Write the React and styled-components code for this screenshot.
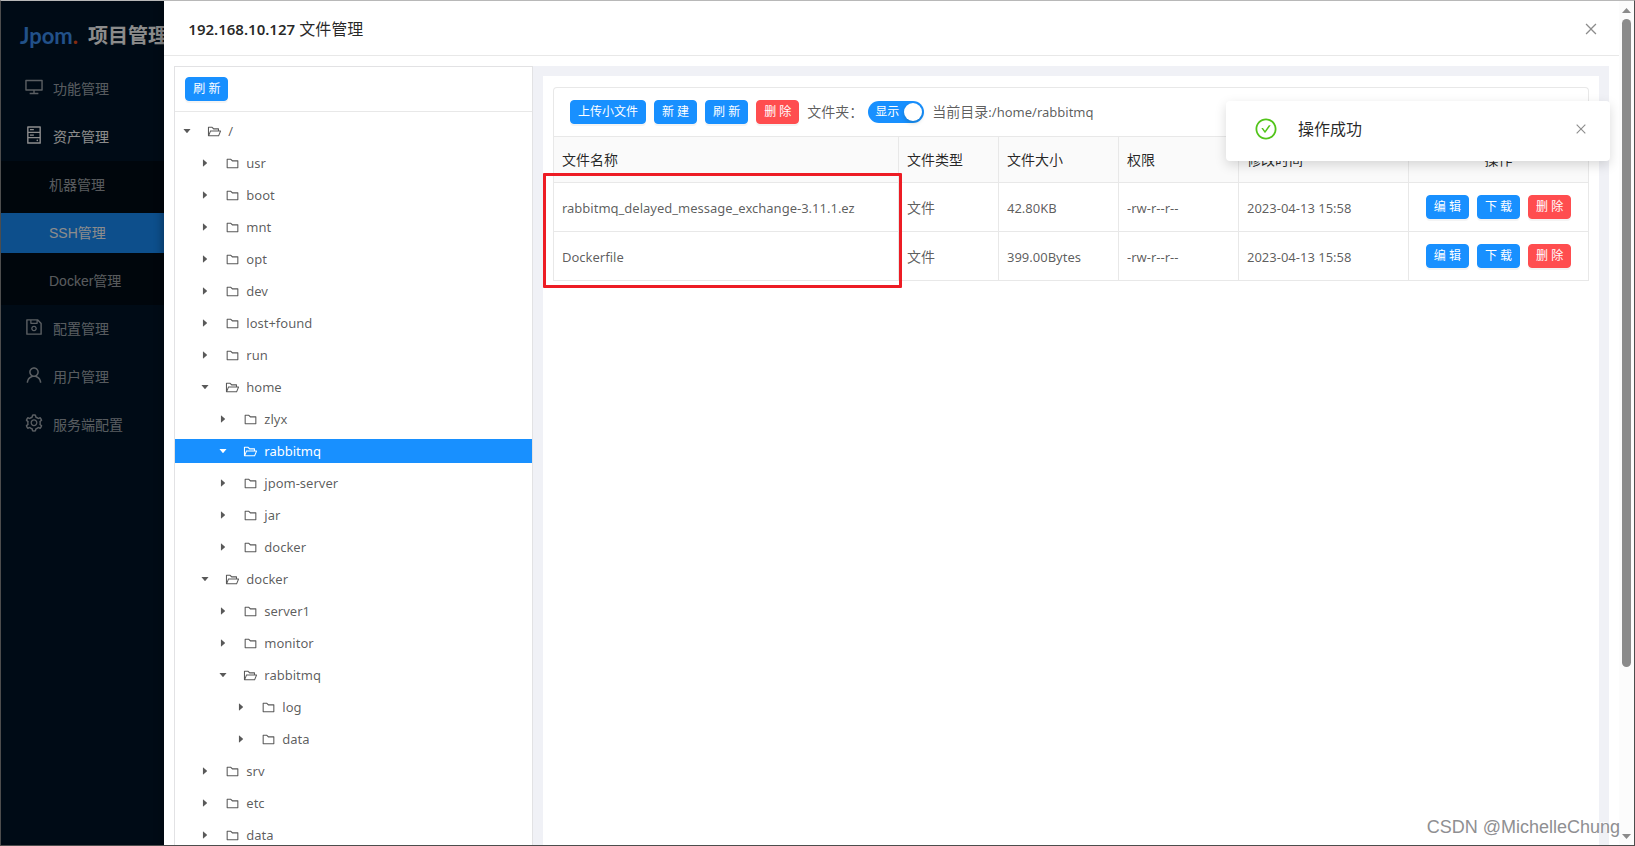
import React from "react";
import styled, { createGlobalStyle, css } from "styled-components";
import {
  AiOutlineDesktop,
  AiOutlineHdd,
  AiOutlineSave,
  AiOutlineUser,
  AiOutlineSetting,
  AiOutlineFolder,
  AiOutlineFolderOpen,
  AiOutlineClose,
  AiOutlineCheckCircle,
  AiFillCaretDown,
  AiFillCaretRight,
} from "react-icons/ai";

const GlobalStyle = createGlobalStyle`
  *, *::before, *::after { box-sizing: border-box; }
  body {
    margin: 0;
    font-family: "Noto Sans", "Noto Sans CJK SC", sans-serif;
    font-size: 14px;
    line-height: 22px;
    color: rgba(0, 0, 0, 0.65);
    background: #fff;
  }
  button { font-family: inherit; cursor: pointer; }
`;

const Window = styled.div`
  position: relative;
  display: flex;
  height: 100vh;
  overflow: hidden;
  border: 1px solid #4d4d4d;
  border-top-color: #b8b8b8;
`;

/* ---------- sidebar ---------- */

const Sidebar = styled.aside`
  position: relative;
  flex: 0 0 10%;
  overflow: hidden;
  background: #001529;
  font-family: "Liberation Sans", "Noto Sans CJK SC", sans-serif;

  &::after {
    content: "";
    position: absolute;
    inset: 0;
    background: rgba(0, 0, 0, 0.45);
    box-shadow: inset -8px 0 8px -6px rgba(0, 0, 0, 0.3);
    pointer-events: none;
  }
`;

const Brand = styled.div`
  display: flex;
  align-items: center;
  gap: 10px;
  height: 64px;
  padding: 6px 0 0 19px;
  white-space: nowrap;
`;

const Logo = styled.span`
  font: 700 22px/28px "Lato", sans-serif;
  color: #3e94f8;
`;

const LogoDot = styled.span`
  color: #f0501e;
`;

const BrandName = styled.h1`
  margin: 0;
  font-size: 20px;
  line-height: 28px;
  font-weight: 700;
  color: #fff;
`;

const Menu = styled.ul`
  list-style: none;
  margin: 0;
  padding: 0;
`;

const SubMenu = styled(Menu)`
  background: #000c17;
`;

const MenuLink = styled.a`
  display: flex;
  align-items: center;
  gap: 9px;
  height: 40px;
  padding-left: ${(p) => (p.$sub ? 48 : 23)}px;
  color: ${(p) => (p.$active ? "#fff" : "rgba(255, 255, 255, 0.65)")};
  background: ${(p) => (p.$selected ? "#1890ff" : "transparent")};
  text-decoration: none;
  white-space: nowrap;

  svg {
    width: 20px;
    height: 20px;
    margin-bottom: 4px;
  }
`;

const MenuItem = styled.li`
  padding: 4px 0;
`;

/* ---------- drawer ---------- */

const Drawer = styled.section`
  display: flex;
  flex-direction: column;
  flex: 1;
  min-width: 0;
  background: #fff;
`;

const DrawerHeader = styled.header`
  display: flex;
  align-items: center;
  justify-content: space-between;
  flex: none;
  height: 55px;
  padding: 1px 20px 0 24px;
  border-bottom: 1px solid #e8e8e8;
`;

const DrawerTitle = styled.h2`
  margin: 0;
  font-size: 16px;
  line-height: 24px;
  font-weight: 400;
  color: rgba(0, 0, 0, 0.85);
`;

const TitleHost = styled.span`
  font-size: 15px;
  font-weight: 600;
`;

const IconButton = styled.button`
  display: flex;
  padding: 0;
  border: 0;
  background: none;
  color: rgba(0, 0, 0, 0.45);
  font-size: ${(p) => p.$size}px;
`;

const DrawerBody = styled.div`
  display: flex;
  flex: 1;
  min-height: 0;
  padding: 10px 10px 0;
`;

const TreePanel = styled.nav`
  flex: 0 0 25%;
  overflow: hidden;
  border: 1px solid #e2e2e4;
  border-bottom: 0;
`;

const TreeHeader = styled.div`
  display: flex;
  align-items: center;
  height: 45px;
  padding: 0 10px;
  border-bottom: 1px solid #e8e8e8;
`;

const Tree = styled.ul`
  display: grid;
  gap: 8px;
  list-style: none;
  margin: 0;
  padding: 7px 0 0;
`;

const TreeRow = styled.li`
  display: flex;
  align-items: center;
  height: 24px;
  padding-left: ${(p) => p.$level * 18 + 7}px;
  font-size: 13px;
  white-space: nowrap;
  ${(p) =>
    p.$selected &&
    css`
      background: #1890ff;
      color: #fff;
    `}
`;

const Caret = styled.button`
  display: flex;
  margin-right: 15px;
  padding: 0;
  border: 0;
  background: none;
  color: inherit;
  font-size: 10px;
`;

const TreeLabel = styled.a`
  display: flex;
  align-items: center;
  gap: 6px;
  color: inherit;
  text-decoration: none;

  svg {
    font-size: 15px;
  }
`;

/* ---------- file list ---------- */

const ContentArea = styled.main`
  flex: 1;
  min-width: 0;
  padding: 10px 10px 0;
  background: #f0f1f6;
`;

const Content = styled.div`
  height: 100%;
  padding: 11px 10px;
  background: #fff;
`;

const TableCard = styled.div`
  position: relative;
  border: 1px solid #e8e8e8;
  border-bottom: 0;
  border-radius: 4px 4px 0 0;
`;

const Toolbar = styled.div`
  display: flex;
  align-items: center;
  gap: 8px;
  height: 49px;
  padding: 0 16px;
  border-bottom: 1px solid #e8e8e8;
  white-space: nowrap;
`;

const Button = styled.button`
  height: 24px;
  padding: 0 7px;
  border: 1px solid ${(p) => (p.$danger ? "#ff4d4f" : "#1890ff")};
  border-radius: 4px;
  background: ${(p) => (p.$danger ? "#ff4d4f" : "#1890ff")};
  box-shadow: 0 2px 0 rgba(0, 0, 0, 0.045);
  color: #fff;
  font-size: 12px;
  line-height: 20px;
  white-space: nowrap;
`;

const SwitchLabel = styled.label`
  display: flex;
  align-items: center;
  gap: 5px;
`;

const SwitchTrack = styled.span`
  display: flex;
  align-items: center;
  justify-content: space-between;
  width: 56px;
  height: 22px;
  padding: 0 2px 0 7px;
  border-radius: 11px;
  background: #1890ff;
  color: #fff;
  font-size: 12px;

  input {
    appearance: none;
    width: 18px;
    height: 18px;
    margin: 0;
    border-radius: 50%;
    background: #fff;
    box-shadow: 0 2px 4px rgba(0, 35, 11, 0.2);
  }
`;

const Latin = styled.span`
  font-size: 13px;
`;

const Table = styled.table`
  width: 100%;
  table-layout: fixed;
  border-collapse: separate;
  border-spacing: 0;
`;

const cell = css`
  border-bottom: 1px solid #e8e8e8;
  text-align: ${(p) => (p.$center ? "center" : "left")};
  white-space: nowrap;

  & + & {
    border-left: 1px solid #e8e8e8;
  }
`;

const Th = styled.th`
  ${cell}
  height: 46px;
  width: ${(p) => (p.$width ? `${p.$width}px` : "auto")};
  padding: 0 8px;
  background: #fafafa;
  color: rgba(0, 0, 0, 0.85);
  font-weight: 400;
  border-left: ${(p) => (p.$width ? "1px solid #e8e8e8" : "0")};
`;

const Td = styled.td`
  ${cell}
  height: 49px;
  padding: ${(p) => (p.$center ? 0 : 2)}px 8px 0;
  font-size: ${(p) => (p.$latin ? 13 : 14)}px;
  border-left: ${(p) => (p.$first ? "0" : "1px solid #e8e8e8")};
`;

const Actions = styled.div`
  display: flex;
  justify-content: center;
  gap: 8px;
`;

const Highlight = styled.div`
  position: absolute;
  top: 85px;
  left: -11px;
  right: 686px;
  height: 115px;
  border: 3px solid #ed1c24;
  border-radius: 1px;
  pointer-events: none;
`;

/* ---------- overlays ---------- */

const Notice = styled.div`
  position: absolute;
  top: 100px;
  right: 24px;
  display: flex;
  align-items: center;
  width: 384px;
  height: 60px;
  padding: 0 22px 4px 28px;
  border-radius: 4px;
  background: #fff;
  box-shadow: 0 4px 12px rgba(0, 0, 0, 0.15);
  color: #52c41a;
`;

const NoticeText = styled.span`
  flex: 1;
  margin-left: 20px;
  font-size: 16px;
  color: rgba(0, 0, 0, 0.85);
`;

const ScrollTrack = styled.div`
  display: flex;
  flex-direction: column;
  align-items: center;
  justify-content: space-between;
  flex: 0 0 15px;
  padding: 7px 0 6px;
  background: #fcfcfc;
  color: #8b8b8b;
`;

const ScrollThumb = styled.div`
  width: 9px;
  height: 78%;
  margin: 6px 0 auto;
  border-radius: 5px;
  background: #8b8b8b;
`;

const Watermark = styled.div`
  position: absolute;
  right: 14px;
  bottom: 6px;
  font-family: "Liberation Sans", sans-serif;
  font-size: 18px;
  line-height: 24px;
  color: #8f8f92;
  text-shadow: -1px -1px 0 #fff;
`;

const Arrow = ({ down }) => (
  <svg width="9" height="5" viewBox="0 0 9 5" aria-hidden="true">
    <path d={down ? "M0 0h9L4.500 5z" : "M0 5h9L4.500 0z"} fill="currentColor" />
  </svg>
);

const assetItems = [
  { label: "机器管理" },
  { label: "SSH管理", selected: true },
  { label: "Docker管理" },
];

const menuItems = [
  { label: "功能管理", icon: AiOutlineDesktop },
  { label: "资产管理", icon: AiOutlineHdd, children: assetItems },
  { label: "配置管理", icon: AiOutlineSave },
  { label: "用户管理", icon: AiOutlineUser },
  { label: "服务端配置", icon: AiOutlineSetting },
];

const treeNodes = [
  { name: "/", level: 0, open: true },
  { name: "usr", level: 1 },
  { name: "boot", level: 1 },
  { name: "mnt", level: 1 },
  { name: "opt", level: 1 },
  { name: "dev", level: 1 },
  { name: "lost+found", level: 1 },
  { name: "run", level: 1 },
  { name: "home", level: 1, open: true },
  { name: "zlyx", level: 2 },
  { name: "rabbitmq", level: 2, open: true, selected: true },
  { name: "jpom-server", level: 2 },
  { name: "jar", level: 2 },
  { name: "docker", level: 2 },
  { name: "docker", level: 1, open: true },
  { name: "server1", level: 2 },
  { name: "monitor", level: 2 },
  { name: "rabbitmq", level: 2, open: true },
  { name: "log", level: 3 },
  { name: "data", level: 3 },
  { name: "srv", level: 1 },
  { name: "etc", level: 1 },
  { name: "data", level: 1 },
];

const columns = [
  { title: "文件名称" },
  { title: "文件类型", width: 100 },
  { title: "文件大小", width: 120 },
  { title: "权限", width: 120 },
  { title: "修改时间", width: 170 },
  { title: "操作", width: 180, center: true },
];

const files = [
  { name: "rabbitmq_delayed_message_exchange-3.11.1.ez", size: "42.80KB" },
  { name: "Dockerfile", size: "399.00Bytes" },
];

function TreeNode({ node }) {
  const CaretIcon = node.open ? AiFillCaretDown : AiFillCaretRight;
  const FolderIcon = node.open ? AiOutlineFolderOpen : AiOutlineFolder;
  return (
    <TreeRow $level={node.level} $selected={node.selected}>
      <Caret type="button" aria-label={`${node.name} ${node.open ? "收起" : "展开"}`}>
        <CaretIcon />
      </Caret>
      <TreeLabel href="#">
        <FolderIcon />
        {node.name}
      </TreeLabel>
    </TreeRow>
  );
}

export default function App() {
  return (
    <>
      <GlobalStyle />
      <Window>
        <Sidebar>
          <Brand>
            <Logo>
              Jpom<LogoDot>.</LogoDot>
            </Logo>
            <BrandName>项目管理</BrandName>
          </Brand>
          <Menu>
            {menuItems.map(({ label, icon: Icon, children }) => (
              <React.Fragment key={label}>
                <MenuItem>
                  <MenuLink href="#" $active={Boolean(children)}>
                    <Icon />
                    {label}
                  </MenuLink>
                </MenuItem>
                {children && (
                  <li>
                    <SubMenu>
                      {children.map((item) => (
                        <MenuItem key={item.label}>
                          <MenuLink
                            href="#"
                            $sub
                            $active={item.selected}
                            $selected={item.selected}
                          >
                            {item.label}
                          </MenuLink>
                        </MenuItem>
                      ))}
                    </SubMenu>
                  </li>
                )}
              </React.Fragment>
            ))}
          </Menu>
        </Sidebar>

        <Drawer>
          <DrawerHeader>
            <DrawerTitle>
              <TitleHost>192.168.10.127</TitleHost> 文件管理
            </DrawerTitle>
            <IconButton type="button" aria-label="关闭" $size={16}>
              <AiOutlineClose />
            </IconButton>
          </DrawerHeader>
          <DrawerBody>
            <TreePanel>
              <TreeHeader>
                <Button type="button">刷 新</Button>
              </TreeHeader>
              <Tree>
                {treeNodes.map((node, i) => (
                  <TreeNode key={i} node={node} />
                ))}
              </Tree>
            </TreePanel>
            <ContentArea>
              <Content>
                <TableCard>
                  <Toolbar>
                    <Button type="button">上传小文件</Button>
                    <Button type="button">新 建</Button>
                    <Button type="button">刷 新</Button>
                    <Button type="button" $danger>
                      删 除
                    </Button>
                    <SwitchLabel>
                      文件夹：
                      <SwitchTrack>
                        显示
                        <input type="checkbox" role="switch" defaultChecked />
                      </SwitchTrack>
                    </SwitchLabel>
                    <span>
                      当前目录<Latin>:/home/rabbitmq</Latin>
                    </span>
                  </Toolbar>
                  <Table>
                    <thead>
                      <tr>
                        {columns.map((col) => (
                          <Th key={col.title} $width={col.width} $center={col.center}>
                            {col.title}
                          </Th>
                        ))}
                      </tr>
                    </thead>
                    <tbody>
                      {files.map((file) => (
                        <tr key={file.name}>
                          <Td $first $latin>
                            {file.name}
                          </Td>
                          <Td>文件</Td>
                          <Td $latin>{file.size}</Td>
                          <Td $latin>-rw-r--r--</Td>
                          <Td $latin>2023-04-13 15:58</Td>
                          <Td $center>
                            <Actions>
                              <Button type="button">编 辑</Button>
                              <Button type="button">下 载</Button>
                              <Button type="button" $danger>
                                删 除
                              </Button>
                            </Actions>
                          </Td>
                        </tr>
                      ))}
                    </tbody>
                  </Table>
                  <Highlight />
                </TableCard>
              </Content>
            </ContentArea>
          </DrawerBody>
        </Drawer>

        <ScrollTrack>
          <Arrow />
          <ScrollThumb />
          <Arrow down />
        </ScrollTrack>

        <Notice role="status">
          <AiOutlineCheckCircle size={24} />
          <NoticeText>操作成功</NoticeText>
          <IconButton type="button" aria-label="关闭通知" $size={14}>
            <AiOutlineClose />
          </IconButton>
        </Notice>
        <Watermark>CSDN @MichelleChung</Watermark>
      </Window>
    </>
  );
}
